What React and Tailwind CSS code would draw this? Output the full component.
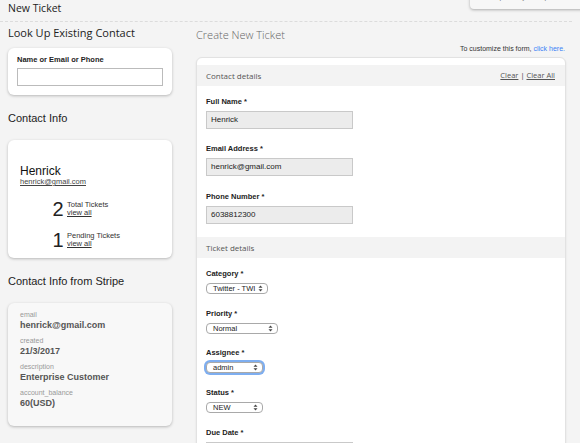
import React from 'react';

const sans = { fontFamily: '"Liberation Sans", Arial, sans-serif' };

const Arrows = () => (
  <svg width="5" height="7" viewBox="0 0 5 7" className="ml-auto shrink-0">
    <path d="M2.5 0.5 L4.5 2.8 L0.5 2.8 Z" fill="#444" />
    <path d="M2.5 6.5 L4.5 4.2 L0.5 4.2 Z" fill="#444" />
  </svg>
);

const Select = ({ value, w, focus }) => (
  <div
    className={`flex items-center h-[11px] rounded-[4px] border border-[#a9a9a9] bg-white pl-[6px] pr-[4px] text-[7.5px] leading-none text-[#222] whitespace-nowrap overflow-hidden ${w} ${focus ? 'shadow-[0_0_0_2px_#7eaef0]' : ''}`}
  >
    <span>{value}</span>
    <Arrows />
  </div>
);

const Field = ({ label, children, className = '' }) => (
  <div className={className}>
    <div className="text-[7.5px] leading-[9px] font-bold text-[#222] mb-[5px]">{label}</div>
    {children}
  </div>
);

const TextBox = ({ value }) => (
  <div className="w-[147px] h-[18px] bg-[#ececec] border border-[#c9c9c9] flex items-center px-[4px] text-[8px] text-[#222]">
    {value}
  </div>
);

const SectionBar = ({ title, right }) => (
  <div className="h-[21px] bg-[#f3f3f3] flex items-center pl-[9px] pr-[10px] text-[8px] text-[#555]" style={{ fontFamily: '"Open Sans", sans-serif' }}>
    <span>{title}</span>
    {right && (
      <span className="ml-auto text-[7.5px] text-[#555]">
        <span className="underline">Clear</span> <span className="text-[#333]">|</span> <span className="underline">Clear All</span>
      </span>
    )}
  </div>
);

const TicketRow = ({ n, label }) => (
  <div className="flex items-center">
    <div className="w-[12px] text-center text-[20px] leading-[18px] text-[#222]">{n}</div>
    <div className="ml-[3px] text-[7.5px] leading-[8px] text-[#333]">
      <div>{label}</div>
      <div className="underline">view all</div>
    </div>
  </div>
);

const StripeItem = ({ label, value, first }) => (
  <div className={first ? '' : 'mt-[5px]'}>
    <div className="text-[7px] leading-[9px] text-[#999]">{label}</div>
    <div className="text-[9px] leading-[12px] font-bold text-[#555]">{value}</div>
  </div>
);

export default function App() {
  return (
    <div className="relative w-[580px] h-[443px] overflow-hidden bg-[#f4f4f4] text-[#222]" style={sans}>
      <div className="absolute right-[-12px] top-[-25px] w-[122px] h-[34px] rounded-[4px] bg-[#f7f7f7] shadow-[0_1px_3px_rgba(0,0,0,0.3)] text-[7px] leading-[9px] text-[#777] pl-[22px] pt-[17px]">
        copied to your clipboard
      </div>

      <div className="mr-2 h-[22px] border-b border-dashed border-[#dcdcdc] pl-2 pt-[1px]" style={{ fontFamily: '"Open Sans", sans-serif' }}>
        <div className="text-[10.5px] leading-[15px] text-[#222]">New Ticket</div>
      </div>

      <div className="flex">
        <div className="ml-2 w-[164px]">
          <div className="mt-[3px] text-[11px] leading-[16px] text-[#222]" style={{ fontFamily: '"Open Sans", sans-serif' }}>
            Look Up Existing Contact
          </div>
          <div className="mt-[7px] h-[47px] rounded-[6px] bg-white shadow-[0_1px_3px_rgba(0,0,0,0.25)] px-[9px] pt-[7px]">
            <div className="text-[7.5px] leading-[10px] font-bold text-[#222]">Name or Email or Phone</div>
            <div className="mt-[3px] h-[18px] border border-[#bbb] bg-white" />
          </div>

          <div className="mt-[16px] text-[11px] leading-[14px] text-[#222]">Contact Info</div>
          <div className="mt-[15px] h-[118px] rounded-[6px] bg-white shadow-[0_1px_3px_rgba(0,0,0,0.25)] pt-[25px]">
            <div className="px-[12px]">
              <div className="text-[12px] leading-[12px] text-[#111]">Henrick</div>
              <div className="text-[7.5px] leading-[9px] underline text-[#444]">henrick@gmail.com</div>
            </div>
            <div className="pl-[44px] mt-[14px]">
              <TicketRow n="2" label="Total Tickets" />
              <div className="mt-[13px]">
                <TicketRow n="1" label="Pending Tickets" />
              </div>
            </div>
          </div>

          <div className="mt-[16px] text-[11px] leading-[14px] text-[#222]">Contact Info from Stripe</div>
          <div className="mt-[15px] h-[123px] rounded-[6px] bg-[#f8f8f8] shadow-[0_1px_3px_rgba(0,0,0,0.25)] px-[12px] pt-[7px]">
            <StripeItem first label="email" value="henrick@gmail.com" />
            <StripeItem label="created" value="21/3/2017" />
            <StripeItem label="description" value="Enterprise Customer" />
            <StripeItem label="account_balance" value="60(USD)" />
          </div>
        </div>

        <div className="ml-6 w-[370px]">
          <div className="mt-[6px] text-[11px] leading-[14px] font-light text-[#666]" style={{ fontFamily: '"Open Sans", sans-serif' }}>
            Create New Ticket
          </div>
          <div className="mt-[2px] text-right text-[7px] leading-[9px] text-[#333] pr-[1px]">
            To customize this form, <span className="text-[#3b82f6]">click here.</span>
          </div>
          <div className="mt-[4px] h-[400px] rounded-t-[6px] bg-white border border-[#e2e2e2] shadow-[0_1px_2px_rgba(0,0,0,0.1)] pt-[7px]">
            <SectionBar title="Contact details" right />
            <div className="pl-[9px]">
              <Field label="Full Name *" className="mt-[11px]">
                <TextBox value="Henrick" />
              </Field>
              <Field label="Email Address *" className="mt-[15px]">
                <TextBox value="henrick@gmail.com" />
              </Field>
              <Field label="Phone Number *" className="mt-[16px]">
                <TextBox value="6038812300" />
              </Field>
            </div>
            <div className="mt-[13px]">
              <SectionBar title="Ticket details" />
            </div>
            <div className="pl-[9px]">
              <Field label="Category *" className="mt-[11px]">
                <Select value="Twitter - TWI" w="w-[62px]" />
              </Field>
              <Field label="Priority *" className="mt-[15px]">
                <Select value="Normal" w="w-[72px]" />
              </Field>
              <Field label="Assignee *" className="mt-[14px]">
                <Select value="admin" w="w-[57px]" focus />
              </Field>
              <Field label="Status *" className="mt-[15px]">
                <Select value="NEW" w="w-[57px]" />
              </Field>
              <Field label="Due Date *" className="mt-[15px]">
                <TextBox value="" />
              </Field>
            </div>
          </div>
        </div>
      </div>
    </div>
  );
}
